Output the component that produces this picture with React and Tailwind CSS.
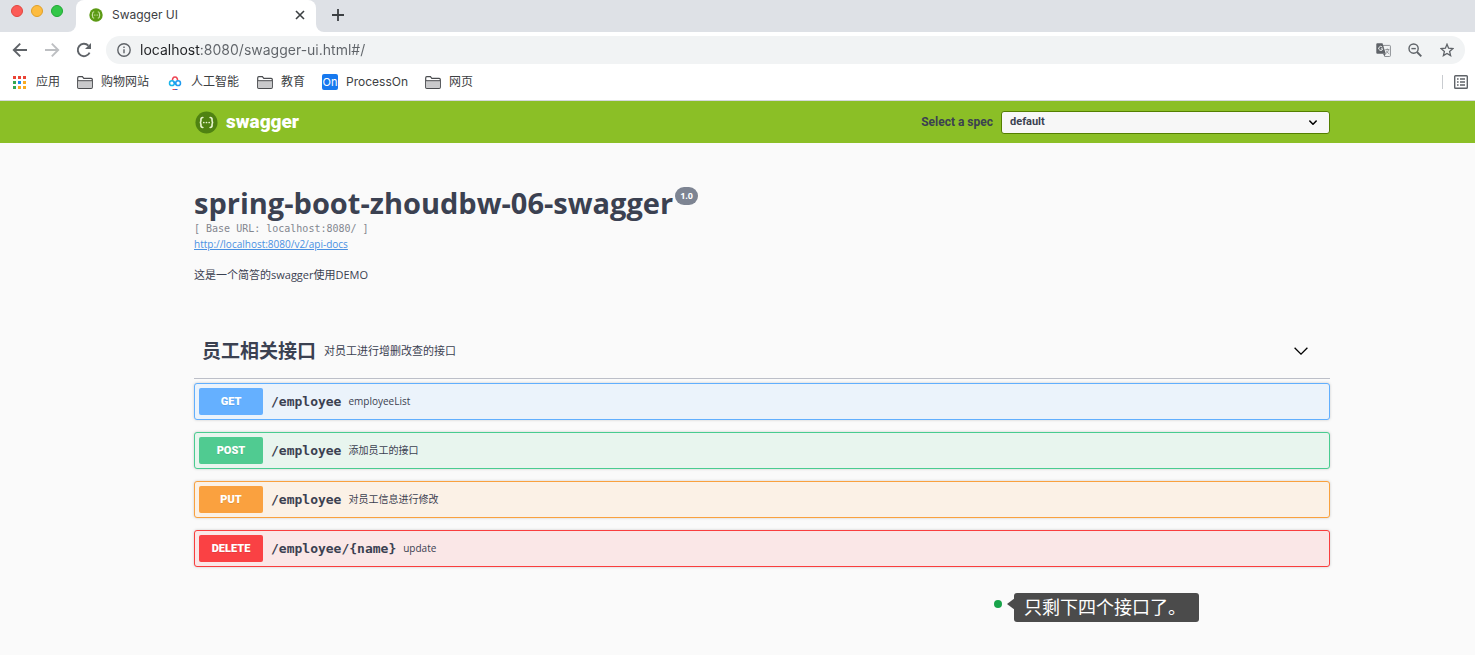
import React from "react";

const UI = "font-['Inter','Noto_Sans_CJK_SC',sans-serif]";
const BODY = "font-['Open_Sans','Noto_Sans_CJK_SC',sans-serif]";
const MONO = "font-['DejaVu_Sans_Mono','Noto_Sans_CJK_SC',monospace]";

function SwaggerMark({ className, bg, fg }) {
  return (
    <svg viewBox="0 0 24 24" className={className} aria-hidden="true">
      <circle cx="12" cy="12" r="11.5" fill={bg} />
      <g fill="none" stroke={fg} strokeWidth="1.7" strokeLinecap="round">
        <path d="M8.2 6.8c-1.7 0-2 .6-2 2v1.3c0 1.2-.4 1.9-1.3 1.9.9 0 1.3.7 1.3 1.9v1.3c0 1.4.3 2 2 2" />
        <path d="M15.8 6.8c1.7 0 2 .6 2 2v1.3c0 1.2.4 1.9 1.3 1.9-.9 0-1.3.7-1.3 1.9v1.3c0 1.4-.3 2-2 2" />
      </g>
      <circle cx="9.2" cy="12" r="0.9" fill={fg} />
      <circle cx="12" cy="12" r="0.9" fill={fg} />
      <circle cx="14.8" cy="12" r="0.9" fill={fg} />
    </svg>
  );
}

function Folder() {
  return (
    <svg viewBox="0 0 16 13" className="h-[13px] w-4" aria-hidden="true">
      <path d="M.7 11.2V1.9c0-.7.4-1.2 1.1-1.2h3.6l1.4 1.7h7.4c.7 0 1.1.4 1.1 1.1v7.7c0 .7-.4 1.1-1.1 1.1H1.8c-.7 0-1.1-.4-1.1-1.1z" fill="#fff" stroke="#4a4c4f" strokeWidth="1.2" />
      <path d="M1.3 5h13.4v6.2c0 .4-.2.6-.5.6H1.8c-.3 0-.5-.2-.5-.6z" fill="#c9c9cb" />
      <path d="M1 4.7h14" stroke="#4a4c4f" />
    </svg>
  );
}

function AppsGrid() {
  const colors = ["#ea4335", "#ea4335", "#ea4335", "#34a853", "#1a8cf0", "#f9ab1f", "#34a853", "#f9ab1f", "#f9ab1f"];
  return (
    <svg viewBox="0 0 13 13" className="size-[13px]" aria-hidden="true">
      {colors.map((c, i) => (
        <rect key={i} x={(i % 3) * 5} y={Math.floor(i / 3) * 5} width="3" height="3" fill={c} />
      ))}
    </svg>
  );
}

function CloudRings() {
  return (
    <svg viewBox="0 0 16 16" className="size-4" fill="none" strokeWidth="1.5" aria-hidden="true">
      <path d="M5.7 6.6a2.5 2.5 0 1 1 4.6 0" stroke="#ee4453" />
      <circle cx="4.9" cy="9.2" r="2.4" stroke="#19b5ea" />
      <circle cx="11.1" cy="9.2" r="2.4" stroke="#1f9bf0" />
      <path d="M6.300 7.300 9.300 10.700" stroke="#1f9bf0" />
      <path d="M5.500 15.500H8" stroke="#ee4453" strokeWidth="1" />
      <path d="M8 15.500h2.500" stroke="#1f6fe0" strokeWidth="1" />
    </svg>
  );
}

function Chevron({ className, width }) {
  return (
    <svg viewBox="0 0 14 8" className={className} fill="none" stroke="currentColor" strokeWidth={width} aria-hidden="true">
      <path d="M.6.7 7 7.1 13.4.7" />
    </svg>
  );
}

function BrowserTabs() {
  return (
    <div className="flex h-8 bg-white">
      <div className="flex w-19 shrink-0 gap-2 rounded-br-lg bg-[#dee1e6] pt-[5px] pl-[11px]">
        <button aria-label="Close window" className="size-3 rounded-full border border-[#e2463f] bg-[#fc5b57]" />
        <button aria-label="Minimize window" className="size-3 rounded-full border border-[#e0a028] bg-[#fdbc40]" />
        <button aria-label="Zoom window" className="size-3 rounded-full border border-[#1fa834] bg-[#33c748]" />
      </div>
      <div className="w-60 shrink-0 bg-[#dee1e6]">
        <div className="flex h-8 items-center rounded-t-lg bg-white pr-[11px] pb-[2px] pl-[13px]">
          <SwaggerMark className="size-[14px]" bg="#5c9a14" fg="#e4f3c8" />
          <span className="ml-[9px] flex-1 text-xs text-[#3c4043]">Swagger UI</span>
          <button aria-label="Close tab" className="text-[#3c4043]">
            <svg viewBox="0 0 10 10" className="size-[10px]" stroke="currentColor" strokeWidth="1.6" aria-hidden="true">
              <path d="M1 1l8 8M9 1 1 9" />
            </svg>
          </button>
        </div>
      </div>
      <div className="flex flex-1 items-center rounded-bl-lg bg-[#dee1e6] pb-[2px] pl-4">
        <button aria-label="New tab" className="text-[#3c4043]">
          <svg viewBox="0 0 12 12" className="size-3" stroke="currentColor" strokeWidth="1.8" aria-hidden="true">
            <path d="M6 0v12M0 6h12" />
          </svg>
        </button>
      </div>
    </div>
  );
}

function Toolbar() {
  return (
    <div className="flex h-9 items-center pr-[10px] pl-3">
      <button aria-label="Back" className="text-[#5f6368]">
        <svg viewBox="0 0 16 16" className="size-4" fill="none" stroke="currentColor" strokeWidth="1.9" aria-hidden="true">
          <path d="M15 8H2M8.2 1.6 1.8 8l6.4 6.4" />
        </svg>
      </button>
      <button aria-label="Forward" className="ml-4 text-[#bdbfc2]">
        <svg viewBox="0 0 16 16" className="size-4" fill="none" stroke="currentColor" strokeWidth="1.9" aria-hidden="true">
          <path d="M1 8h13M7.8 1.6 14.2 8l-6.4 6.4" />
        </svg>
      </button>
      <button aria-label="Reload" className="ml-4 text-[#5f6368]">
        <svg viewBox="0 0 16 16" className="size-4" aria-hidden="true">
          <path d="M13.6 10.6A6.2 6.2 0 1 1 12.4 3.6" fill="none" stroke="currentColor" strokeWidth="1.9" />
          <path d="M15 1v6H9z" fill="currentColor" />
        </svg>
      </button>
      <div className="ml-[14px] flex h-7 flex-1 items-center rounded-full bg-[#f1f3f4] px-[11px] text-[#5f6368]">
        <svg viewBox="0 0 14 14" className="size-[14px] shrink-0" fill="none" stroke="currentColor" strokeWidth="1.4" aria-hidden="true">
          <circle cx="7" cy="7" r="6.2" />
          <path d="M7 6.2v4M7 3.4v1.5" />
        </svg>
        <input
          aria-label="Address"
          defaultValue="localhost:8080/swagger-ui.html#/"
          className="ml-[9px] min-w-0 flex-1 bg-[linear-gradient(to_right,#202124_60px,#5f6368_60px)] bg-clip-text text-sm text-transparent outline-none"
        />
        <button aria-label="Translate page">
          <svg viewBox="0 0 15 14" className="h-[14px] w-[15px]" fill="none" aria-hidden="true">
            <path d="M6.5 2.400h7.200c.4 0 .7.3.7.7v9.700c0 .4-.3.7-.7.7H8.500" stroke="#8d9195" />
            <path d="M1.300.3h5.200l3.300 10.400H1.300A1 1 0 0 1 .3 9.700V1.300a1 1 0 0 1 1-1z" fill="#5f6368" />
            <path d="M6.300 4.200A2 2 0 1 0 6.700 5.800H4.900" stroke="#f1f3f4" />
            <path d="M9.300 6.500h4M11.300 5.500v1M12.600 6.500c-.4 1.900-1.500 3.200-2.800 4.200M10.100 7.500c.5 1.300 1.500 2.300 3 3.200" stroke="#8d9195" strokeWidth=".9" />
            <path d="m7 10.700 1.500 2.800 1.200-2.800z" fill="#5f6368" />
          </svg>
        </button>
        <button aria-label="Zoom out" className="ml-[17px]">
          <svg viewBox="0 0 14 14" className="size-[14px]" fill="none" stroke="currentColor" strokeWidth="1.4" aria-hidden="true">
            <circle cx="5.6" cy="5.6" r="4.6" />
            <path d="M3.400 5.600h4.400" />
            <path d="m9 9 4.300 4.300" strokeWidth="1.900" />
          </svg>
        </button>
        <button aria-label="Bookmark this page" className="ml-[18px]">
          <svg viewBox="0 0 14 14" className="size-[14px]" fill="none" stroke="currentColor" strokeWidth="1.300" aria-hidden="true">
            <path d="m7 1.300 1.600 3.900 4.300.4-3.300 2.800 1 4.200L7 10.400l-3.600 2.200 1-4.200L1.100 5.600l4.300-.4z" />
          </svg>
        </button>
      </div>
    </div>
  );
}

function Bookmark({ icon, label, className }) {
  return (
    <a href="#/" className={`flex items-center ${className}`}>
      {icon}
      <span>{label}</span>
    </a>
  );
}

function Bookmarks() {
  return (
    <nav aria-label="Bookmarks" className="flex h-[33px] items-center border-b border-[#d5d8dc] pr-[7px] pb-1 pl-[13px] text-xs text-[#3c4043]">
      <Bookmark icon={<AppsGrid />} label="应用" className="gap-[10px]" />
      <Bookmark icon={<Folder />} label="购物网站" className="ml-[17px] gap-2" />
      <Bookmark icon={<CloudRings />} label="人工智能" className="ml-[18px] gap-2" />
      <Bookmark icon={<Folder />} label="教育" className="ml-[18px] gap-2" />
      <Bookmark
        icon={<span className="flex size-4 items-center justify-center rounded-[2px] bg-[#1779ef] text-[11px] text-white">On</span>}
        label="ProcessOn"
        className="ml-[17px] gap-2"
      />
      <Bookmark icon={<Folder />} label="网页" className="ml-[17px] gap-2" />
      <div className="ml-auto flex items-center border-l border-[#c9ccd0] pl-[11px]">
        <button aria-label="Reading list">
          <svg viewBox="0 0 14 14" className="size-[14px]" fill="none" stroke="#5f6368" strokeWidth="1.400" aria-hidden="true">
            <rect x=".7" y=".7" width="12.6" height="12.6" rx=".8" />
            <path d="M3 4h1.600M6 4h5M3 7h1.600M6 7h5M3 10h1.600M6 10h5" />
          </svg>
        </button>
      </div>
    </nav>
  );
}

function Topbar() {
  return (
    <div className="flex h-[42px] items-center bg-[#8bbf26] pr-[145px] pl-[195px] font-['Roboto',sans-serif] text-[#3b4151]">
      <a href="#/" className="flex items-center gap-2 text-[19px] leading-6 font-black text-white">
        <SwaggerMark className="size-[23px]" bg="#4f8212" fg="#e9f5d0" />
        <span>swagger</span>
      </a>
      <div className="ml-auto flex items-center gap-2">
        <label htmlFor="spec" className="text-xs font-bold">Select a spec</label>
        <div className="relative w-[329px]">
          <select id="spec" className="block h-[23px] w-full appearance-none rounded-[3px] border border-[#547f00] bg-[#f7f7f7] px-2 text-[11px] font-bold">
            <option>default</option>
          </select>
          <Chevron className="pointer-events-none absolute top-[9px] right-[13px] h-[5px] w-2 text-black" width={2.6} />
        </div>
      </div>
    </div>
  );
}

const OPERATIONS = [
  { method: "GET", path: "/employee", summary: "employeeList", row: "border-[#61affe] bg-[#ebf3fb]", badge: "bg-[#65b0ff]" },
  { method: "POST", path: "/employee", summary: "添加员工的接口", row: "border-[#49cc90] bg-[#e8f5ee]", badge: "bg-[#50cb91]" },
  { method: "PUT", path: "/employee", summary: "对员工信息进行修改", row: "border-[#f9a13e] bg-[#fbf1e6]", badge: "bg-[#faa13f]" },
  { method: "DELETE", path: "/employee/{name}", summary: "update", row: "border-[#f93e3e] bg-[#fae7e7]", badge: "bg-[#fa4144]" },
];

function Operation({ op }) {
  return (
    <button className={`flex h-[37px] w-full items-center rounded-[3px] border px-1 text-left shadow-[0_0_3px_rgba(0,0,0,0.19)] ${op.row}`}>
      <span className={`flex h-[27px] w-16 items-center justify-center rounded-[2px] pt-px font-['Roboto',sans-serif] text-[11px] font-black text-white [text-shadow:0_1px_0_rgba(0,0,0,0.1)] ${op.badge}`}>
        {op.method}
      </span>
      <span className={`ml-2 text-[13px] font-semibold ${MONO}`}>{op.path}</span>
      <span className="ml-[7px] text-[10px]">{op.summary}</span>
    </button>
  );
}

function ApiDocs() {
  return (
    <main className={`pt-10 pr-[145px] pl-[194px] text-[#3b4151] ${BODY}`}>
      <header>
        <h1 className="flex items-start gap-[2px] text-[29px] leading-10 font-bold">
          spring-boot-zhoudbw-06-swagger
          <span className="mt-1 rounded-full bg-[#7d8492] px-[5px] text-[9px] leading-[18px] text-white">1.0</span>
        </h1>
        <p className={`text-[10px] leading-3 text-[#83868f] ${MONO}`}>[ Base URL: localhost:8080/ ]</p>
        <a href="#/" className="mt-[2px] block w-fit text-[10px] leading-[14px] text-[#4990e2] underline">http://localhost:8080/v2/api-docs</a>
        <p className="mt-4 text-[11px] leading-4">这是一个简答的swagger使用DEMO</p>
      </header>
      <section className="mt-10">
        <button className="flex h-[56px] w-full items-center border-b border-[#bcbfc8] pr-[22px] pl-2 text-left">
          <span className="text-[19px] leading-7 font-bold">员工相关接口</span>
          <span className="ml-2 text-[11px] leading-7">对员工进行增删改查的接口</span>
          <Chevron className="ml-auto h-2 w-[14px] text-black" width={1.3} />
        </button>
        <div className="mt-1 flex flex-col gap-3">
          {OPERATIONS.map((op) => (
            <Operation key={op.method} op={op} />
          ))}
        </div>
      </section>
    </main>
  );
}

function Callout() {
  return (
    <div className="absolute top-[593px] left-[994px] flex items-start font-['Noto_Sans_CJK_SC',sans-serif]">
      <span className="mt-[7px] size-2 rounded-full bg-[#17a34a]" />
      <svg viewBox="0 0 8 12" className="mt-[5px] ml-[5px] h-3 w-2" aria-hidden="true">
        <path d="M8 0v12L0 6z" fill="#4b4b4b" />
      </svg>
      <span className="-ml-px h-[29px] rounded-[3px] bg-[#4b4b4b] pr-[13px] pl-[10px] text-lg leading-[26px] text-white">只剩下四个接口了。</span>
    </div>
  );
}

export default function App() {
  return (
    <div className={`relative min-h-screen bg-[#fafafa] ${UI}`}>
      <div className="bg-white">
        <BrowserTabs />
        <Toolbar />
        <Bookmarks />
      </div>
      <Topbar />
      <ApiDocs />
      <Callout />
    </div>
  );
}
